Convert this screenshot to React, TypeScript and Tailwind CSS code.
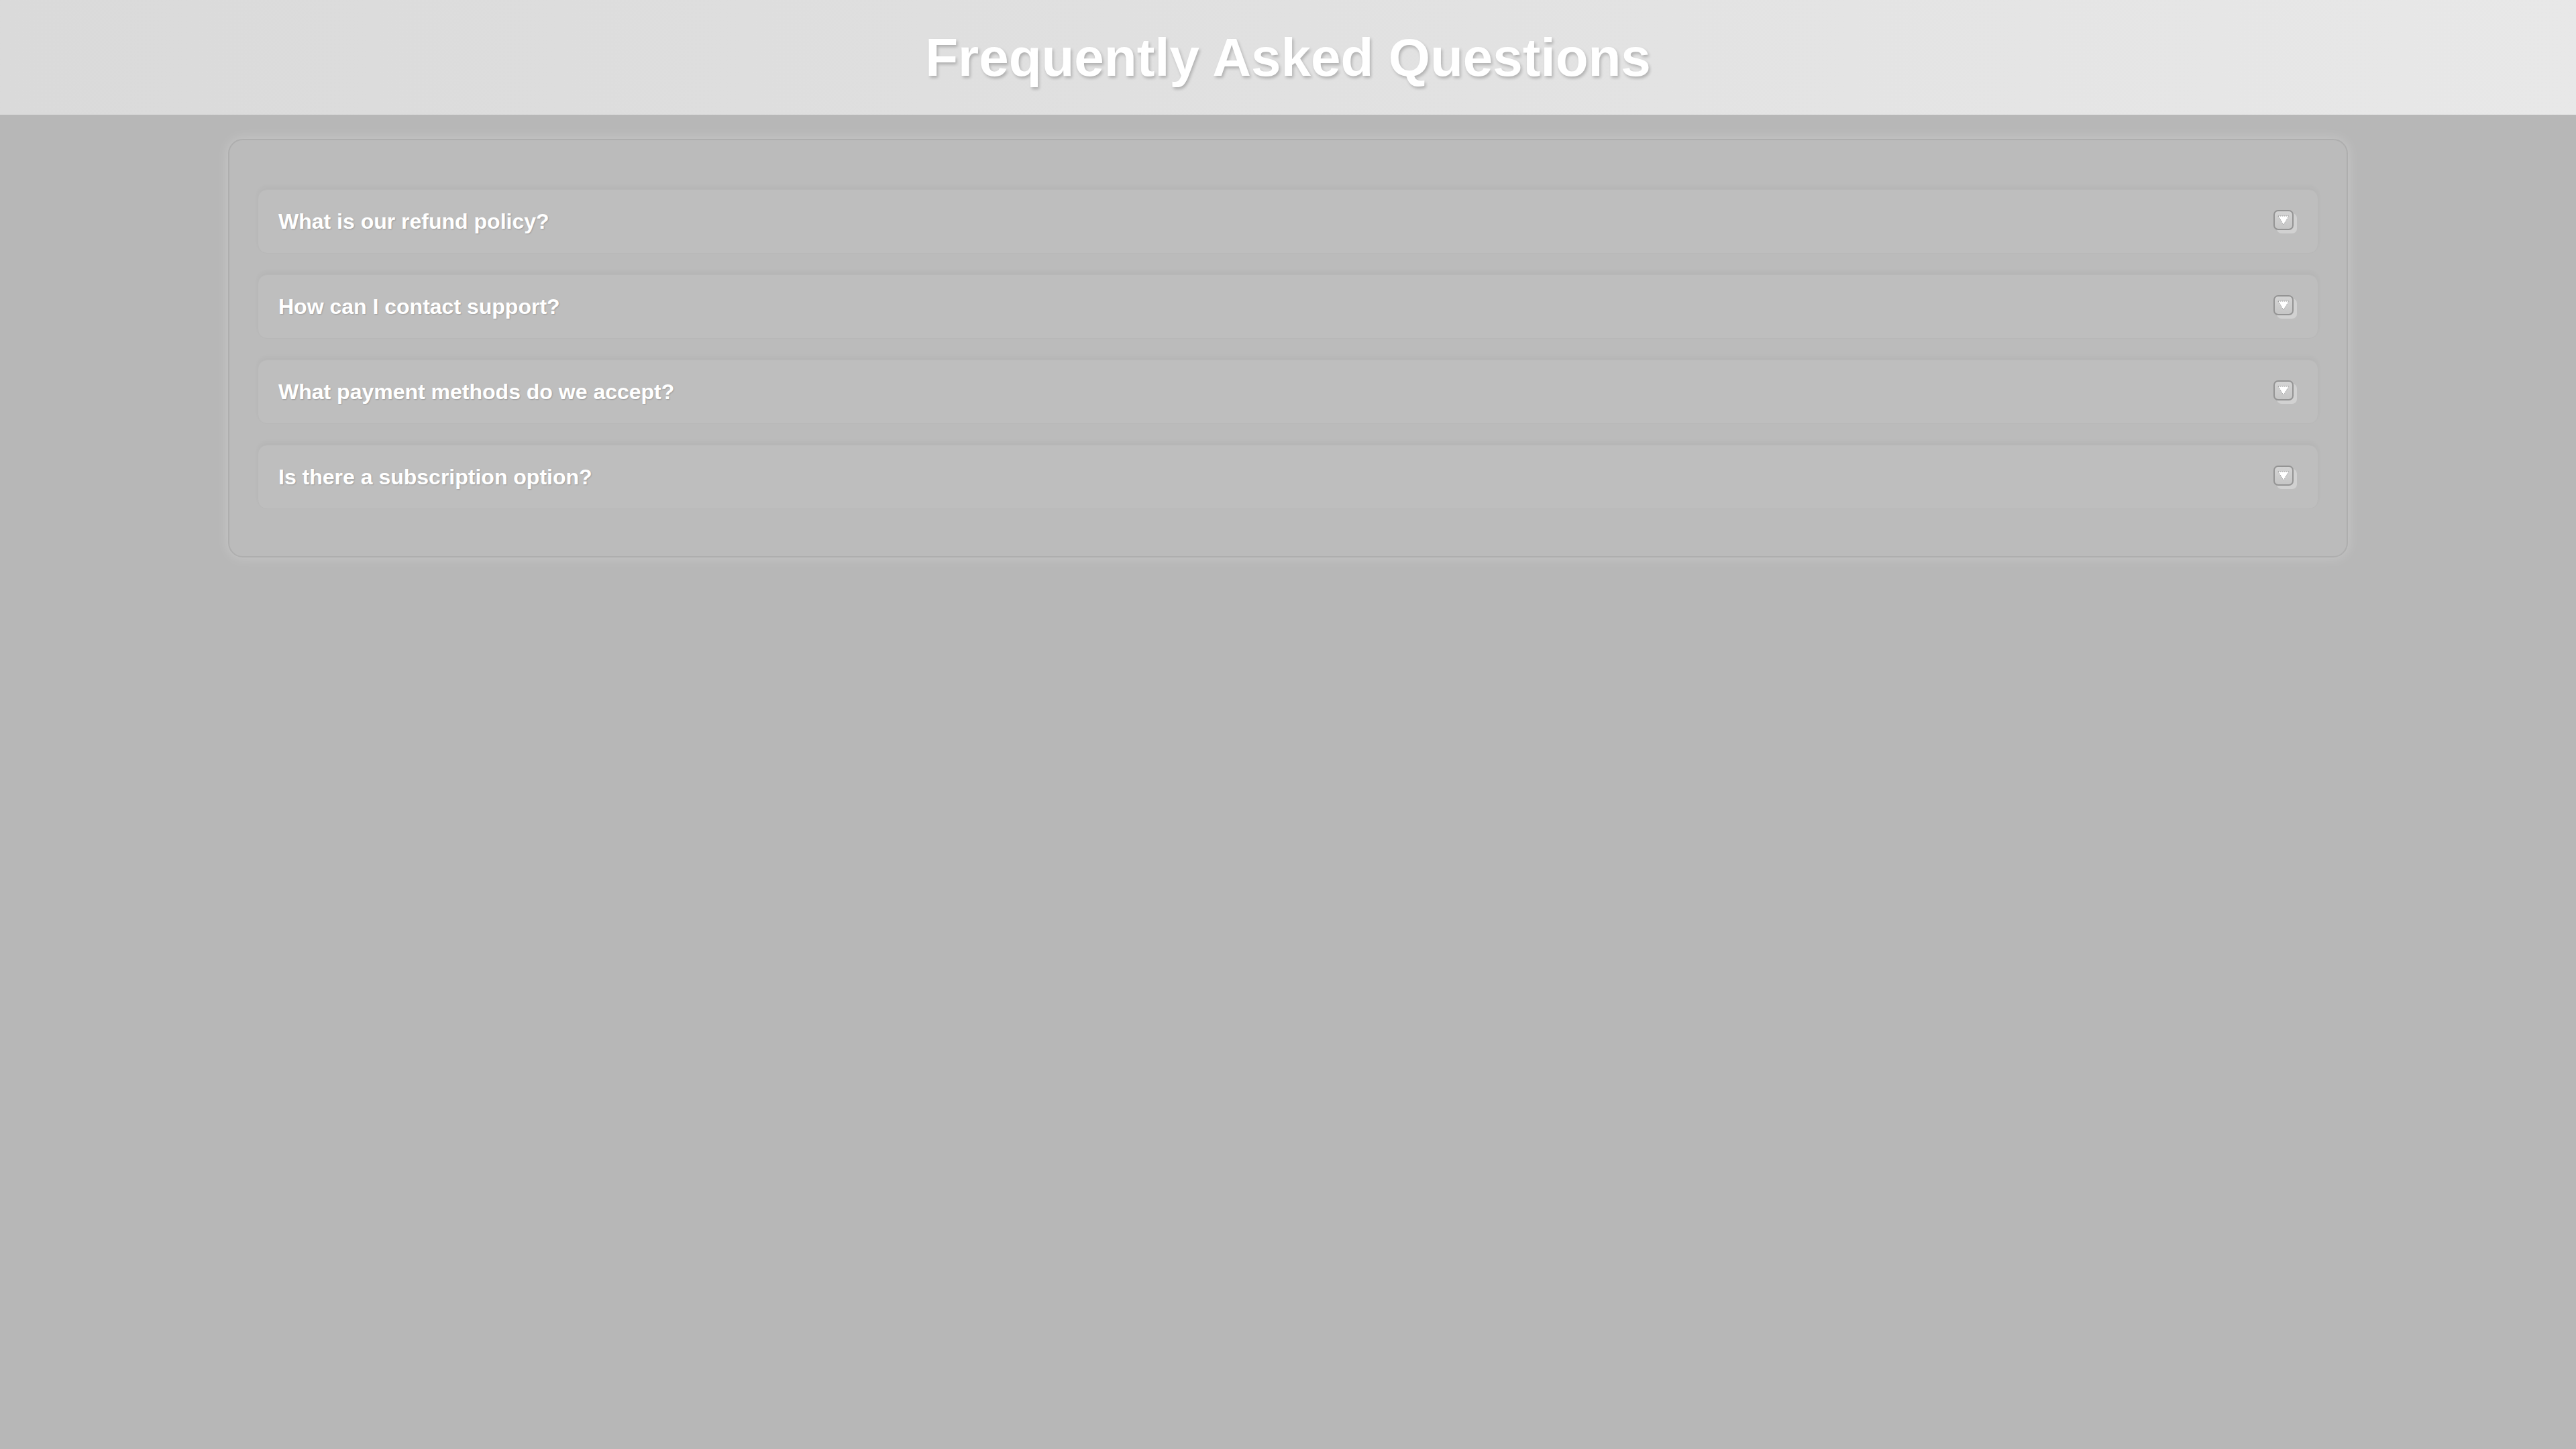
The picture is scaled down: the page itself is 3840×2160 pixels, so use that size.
import React from 'react';

const questions = [
  'What is our refund policy?',
  'How can I contact support?',
  'What payment methods do we accept?',
  'Is there a subscription option?',
];

// little embossed toggle box with a down triangle
const ToggleIcon: React.FC = () => (
  <div className="relative w-[35px] h-[35px]">
    <div className="absolute left-[5px] top-[5px] w-[30px] h-[30px] rounded-[7px] bg-[#d6d6d6]/80" />
    <div className="absolute left-0 top-0 w-[30px] h-[30px] rounded-[7px] border-2 border-[#949494] bg-gradient-to-b from-[#d4d4d4] to-[#c6c6c6] flex items-center justify-center">
      <svg width="20" height="18" viewBox="0 0 20 18">
        <path d="M2 3 L18 3 L10 16 Z" fill="#ffffff" stroke="#9a9a9a" strokeWidth="1" strokeDasharray="1.5 1.5" />
      </svg>
    </div>
  </div>
);

const App: React.FC = () => {
  return (
    <div className="min-h-screen bg-[#b7b7b7] font-['Liberation_Sans',Arial,sans-serif]">
      <header className="h-[171px] flex items-center justify-center bg-gradient-to-r from-[#dadada] to-[#e8e8e8]">
        <h1 className="text-[80px] font-bold text-white leading-none [text-shadow:2px_3px_4px_rgba(0,0,0,0.22)]">
          Frequently Asked Questions
        </h1>
      </header>

      <main className="pt-[36px]">
        <div className="mx-auto w-[3160px] rounded-[22px] border-2 border-[#aeaeae] bg-[#bbbbbb] px-[42px] pt-[73px] pb-[70px] shadow-[0_0_18px_rgba(255,255,255,0.25)]">
          <div className="flex flex-col gap-[31px]">
            {questions.map((q) => (
              <div
                key={q}
                className="h-[96px] flex items-center justify-between rounded-[14px] border border-[#b8b8b8] bg-[#bebebe] pl-[30px] pr-[31px] shadow-[0_-4px_6px_rgba(0,0,0,0.03)]"
              >
                <span className="text-[32px] font-bold text-white [text-shadow:1px_1px_2px_rgba(0,0,0,0.18)]">{q}</span>
                <ToggleIcon />
              </div>
            ))}
          </div>
        </div>
      </main>
    </div>
  );
};

export default App;
